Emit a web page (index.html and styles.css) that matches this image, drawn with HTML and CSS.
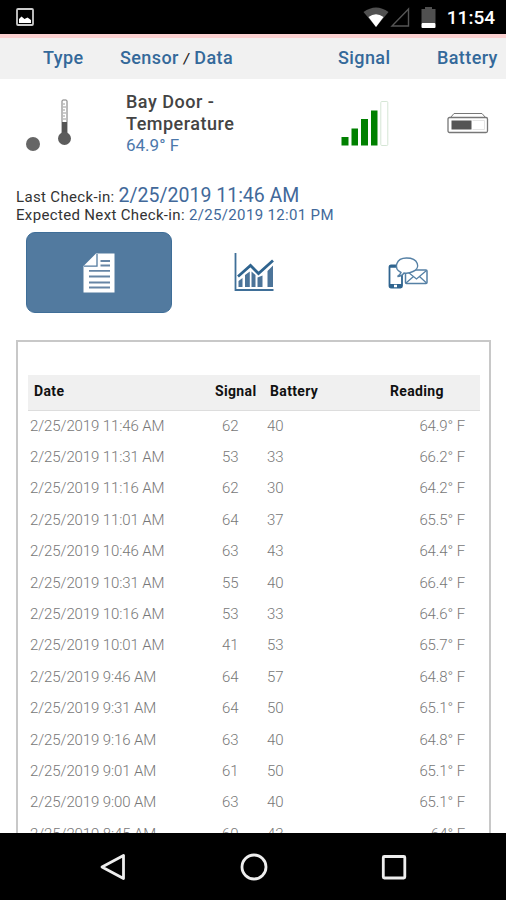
FILE: index.html
```html
<!DOCTYPE html>
<html lang="en">

<head>
    <meta charset="UTF-8">
    <meta name="viewport" content="width=device-width, initial-scale=1.0">
    <title>Bay Door - Temperature</title>
    <link rel="stylesheet" href="styles.css">
</head>

<body>
    <div class="screen">
        <header class="status-bar">
            <svg class="status-picture" width="18" height="18" viewBox="0 0 18 18">
                <rect x="1" y="1" width="16" height="16" rx="1" fill="none" stroke="#ccc" stroke-width="1.8" />
                <path d="M3 15V11L5.500 8.500 8.500 11 11.500 9.500 15 12V15Z" fill="#fff" />
            </svg>
            <div class="status-icons">
                <svg width="26" height="20" viewBox="0 0 26 20">
                    <path d="M0.500 5Q13-4 25.500 5L13 20Z" fill="#505050" />
                    <path d="M5.500 10Q13 4.500 20.500 10L13 20Z" fill="#fff" />
                </svg>
                <svg class="status-cell" width="20" height="20" viewBox="0 0 20 20">
                    <path d="M2 19H18.500V2Z" fill="none" stroke="#555" stroke-width="1.4" />
                </svg>
                <svg class="status-battery" width="15" height="22" viewBox="0 0 15 22">
                    <path d="M0.500 2H4V0H11V2H14.500V16H0.500Z" fill="#505050" />
                    <rect x="0.500" y="16" width="14" height="5" rx="1" fill="#fff" />
                </svg>
                <span class="clock">11:54</span>
            </div>
        </header>

        <div class="sensor-header">
            <span>Type</span>
            <span>Sensor <i>/</i> Data</span>
            <span>Signal</span>
            <span>Battery</span>
        </div>

        <div class="sensor-row">
            <div class="sensor-type">
                <svg width="50" height="56" viewBox="0 0 50 56">
                    <circle cx="8" cy="45" r="7" fill="#666" />
                    <rect x="37" y="1" width="5" height="34" rx="1" fill="#fff" stroke="#777" />
                    <path d="M38 5H40M38 8H41M38 11H40M38 14H41M38 17H40M38 20H41" stroke="#999" />
                    <rect x="37" y="23" width="5" height="14" fill="#555" />
                    <circle cx="39.500" cy="39.500" r="6.500" fill="#5c5c5c" />
                </svg>
            </div>
            <div class="sensor-name">
                <strong>Bay Door -<br>Temperature</strong>
                <span class="sensor-value">64.9° F</span>
            </div>
            <div class="sensor-signal">
                <svg width="48" height="47" viewBox="0 0 48 47">
                    <g fill="#008000">
                        <rect x="0.500" y="37" width="7" height="8.500" />
                        <rect x="10.500" y="28.500" width="6.500" height="17" />
                        <rect x="20" y="19" width="7" height="26.500" />
                        <rect x="30" y="10.500" width="6.500" height="35" />
                    </g>
                    <rect x="39.800" y="1.500" width="7" height="44" rx="1" fill="#fff" stroke="#d5e6d5" />
                </svg>
            </div>
            <div class="sensor-battery">
                <svg width="42" height="22" viewBox="0 0 42 22">
                    <path d="M3.500 5.500L7 1.500H35L38.500 5.500" fill="#fff" stroke="#777" />
                    <rect x="1" y="5.500" width="39.500" height="15" rx="1.500" fill="#fff" stroke="#777" stroke-width="1.300" />
                    <rect x="4.500" y="8.500" width="20" height="9" fill="#555" />
                    <path d="M25.500 8.500H37.500V17.500H25.500" fill="none" stroke="#ddd" stroke-width="0.800" />
                </svg>
            </div>
        </div>

        <div class="checkin">
            <p>Last Check-in: <b class="last-time">2/25/2019 11:46 AM</b></p>
            <p>Expected Next Check-in: <b>2/25/2019 12:01 PM</b></p>
        </div>

        <nav class="tabs">
            <a class="tab active">
                <svg width="32" height="40" viewBox="0 0 32 40">
                    <path d="M0.500 13L13 0.500H31.500V39.500H0.500Z" fill="#fff" />
                    <path d="M1 13.200H14V1" fill="none" stroke="#527a9f" stroke-width="1.300" />
                    <path d="M17.500 8H27M17.500 12.500H27M6 17.800H27M6 23.500H27M6 29.500H27M6 34.500H27" stroke="#6685a5" stroke-width="1.800" />
                </svg>
            </a>
            <a class="tab">
                <svg width="40" height="39" viewBox="0 0 40 39">
                    <path d="M1.500 0V37H39.500" fill="none" stroke="#3f6f98" stroke-width="1.800" />
                    <path d="M4 23.500L16.500 12.500 24.500 20.500 39 7.500" fill="none" stroke="#2f648f" stroke-width="2.800" />
                    <path d="M4.500 34V28L8.500 25V34ZM11 34V22L15.800 18.500V34ZM17.500 34V18.500L21.500 22V34ZM23.500 34V24.500L28.500 22.500V34ZM33.500 34V18L39 12.500V34Z" fill="#4c7499" />
                </svg>
            </a>
            <a class="tab">
                <svg width="40" height="32" viewBox="0 0 40 32">
                    <rect x="1.500" y="8.500" width="12.500" height="22" rx="1.500" fill="#fff" stroke="#2f648f" stroke-width="1.800" />
                    <path d="M1.500 27H14V30.500H1.500Z" fill="#2f648f" />
                    <path d="M6 29H9" stroke="#fff" stroke-width="2.500" />
                    <path d="M1.500 9.500H9" stroke="#2f648f" stroke-width="2.500" />
                    <rect x="17.500" y="13" width="21.500" height="13.500" rx="1" fill="#fff" stroke="#5580a5" stroke-width="1.500" />
                    <path d="M18 13.500L28.500 22 38.500 13.500M18 26L25.500 19.500M38.500 26L31.500 19.500" fill="none" stroke="#5580a5" stroke-width="1.300" />
                    <path d="M13 15.500C5 11.500 8 1 18.500 1C30.500 1 33 11 25 14.500C22 16 19 16.500 16 16C14.500 18 12 19.500 9.500 19.500C11.500 18.500 12.500 17 13 15.500Z" fill="#fff" stroke="#5580a5" stroke-width="1.400" />
                </svg>
            </a>
        </nav>

        <main class="panel">
            <table class="readings">
                <thead>
                    <tr>
                        <th class="date">Date</th>
                        <th class="signal">Signal</th>
                        <th class="battery">Battery</th>
                        <th class="reading">Reading</th>
                    </tr>
                </thead>
                <tbody>
                    <tr><td>2/25/2019 11:46 AM</td><td>62</td><td>40</td><td>64.9° F</td></tr>
                    <tr><td>2/25/2019 11:31 AM</td><td>53</td><td>33</td><td>66.2° F</td></tr>
                    <tr><td>2/25/2019 11:16 AM</td><td>62</td><td>30</td><td>64.2° F</td></tr>
                    <tr><td>2/25/2019 11:01 AM</td><td>64</td><td>37</td><td>65.5° F</td></tr>
                    <tr><td>2/25/2019 10:46 AM</td><td>63</td><td>43</td><td>64.4° F</td></tr>
                    <tr><td>2/25/2019 10:31 AM</td><td>55</td><td>40</td><td>66.4° F</td></tr>
                    <tr><td>2/25/2019 10:16 AM</td><td>53</td><td>33</td><td>64.6° F</td></tr>
                    <tr><td>2/25/2019 10:01 AM</td><td>41</td><td>53</td><td>65.7° F</td></tr>
                    <tr><td>2/25/2019 9:46 AM</td><td>64</td><td>57</td><td>64.8° F</td></tr>
                    <tr><td>2/25/2019 9:31 AM</td><td>64</td><td>50</td><td>65.1° F</td></tr>
                    <tr><td>2/25/2019 9:16 AM</td><td>63</td><td>40</td><td>64.8° F</td></tr>
                    <tr><td>2/25/2019 9:01 AM</td><td>61</td><td>50</td><td>65.1° F</td></tr>
                    <tr><td>2/25/2019 9:00 AM</td><td>63</td><td>40</td><td>65.1° F</td></tr>
                    <tr><td>2/25/2019 8:45 AM</td><td>60</td><td>43</td><td>64° F</td></tr>
                </tbody>
            </table>
        </main>

        <footer class="nav-bar">
            <svg width="28" height="28" viewBox="0 0 28 28">
                <path d="M3 14L24.500 2.500V25.500Z" />
            </svg>
            <svg width="28" height="28" viewBox="0 0 28 28">
                <circle cx="14" cy="14" r="12" />
            </svg>
            <svg width="28" height="28" viewBox="0 0 28 28">
                <rect x="3.300" y="3.500" width="21.500" height="21.500" rx="1" />
            </svg>
        </footer>
    </div>
</body>

</html>
```
FILE: styles.css
```css
* {
    box-sizing: border-box;
}

body {
    margin: 0;
    font-family: Roboto, "Liberation Sans", sans-serif;
    background-color: #fff;
}

svg {
    display: block;
}

.screen {
    display: flex;
    flex-direction: column;
    width: 506px;
    height: 900px;
    overflow: hidden;
}

/* Android status bar */
.status-bar {
    display: flex;
    flex: none;
    justify-content: space-between;
    height: 38px;
    padding: 7px 10px 0 16px;
    background-color: #000;
    border-bottom: 4px solid #fbd0d0;
}

.status-picture {
    margin-top: 1px;
}

.status-icons {
    display: flex;
    align-items: flex-start;
    margin-right: 1px;
}

.status-cell {
    margin-left: 1px;
}

.status-battery {
    margin-left: 11px;
}

.clock {
    margin-left: 11px;
    color: #fff;
    font-size: 19px;
    font-weight: 500;
    line-height: 22px;
}

/* Sensor summary */
.sensor-header,
.sensor-row {
    display: grid;
    flex: none;
    grid-template-columns: 120px 218px 98px 1fr;
}

.sensor-header {
    height: 41px;
    background-color: #f1f1f1;
    color: #34699a;
    font-size: 18px;
    font-weight: 500;
    letter-spacing: 0.4px;
    line-height: 40px;
    white-space: nowrap;
}

.sensor-header span:first-child {
    padding-left: 43px;
}

.sensor-header span:last-child {
    padding-left: 1px;
}

.sensor-header i {
    color: #222;
    font-size: 14px;
}

.sensor-row {
    height: 107px;
}

.sensor-type {
    padding: 20px 0 0 25px;
}

.sensor-name {
    padding: 12px 0 0 6px;
    color: #444;
    font-size: 18px;
    line-height: 22px;
}

.sensor-name strong {
    font-weight: 500;
    letter-spacing: 0.5px;
}

.sensor-value {
    display: block;
    color: #4c78ab;
    font-size: 17px;
    line-height: 20px;
}

.sensor-signal {
    padding: 21px 0 0 3px;
}

.sensor-battery {
    padding: 33px 0 0 11px;
}

.checkin {
    flex: none;
    height: 46px;
    padding-left: 16px;
    color: #333;
    font-size: 15px;
    letter-spacing: 0.34px;
}

.checkin p {
    height: 20px;
    margin: 0;
    line-height: 19px;
    white-space: nowrap;
}

.checkin b {
    color: #42699a;
    font-weight: 400;
}

.checkin .last-time {
    font-size: 19.500px;
    letter-spacing: 0;
}

/* Tabs */
.tabs {
    display: grid;
    flex: none;
    grid-template-columns: 146px 146px 146px;
    column-gap: 9px;
    height: 81px;
    padding-left: 26px;
}

.tab {
    display: flex;
    align-items: center;
    justify-content: center;
    border-radius: 9px;
}

.tab.active {
    background-color: #527a9f;
    border: 1px solid #3f6e98;
}

.tab:last-child svg {
    margin-left: -2px;
}

/* Readings */
.panel {
    flex: 1;
    min-height: 0;
    margin: 27px 15px 0 16px;
    padding: 33px 9px 0 10px;
    overflow: hidden;
    border: 2px solid #c8c8c8;
    border-bottom: none;
}

.readings {
    width: 452px;
    border-collapse: collapse;
    table-layout: fixed;
    color: #777;
    font-size: 15px;
    font-weight: 300;
    letter-spacing: -0.1px;
}

.readings th {
    height: 35px;
    padding: 0 0 2px;
    background-color: #f0f0f0;
    border-bottom: 1px solid #ddd;
    color: #111;
    font-size: 14px;
    font-weight: 700;
    letter-spacing: 0.35px;
    text-align: left;
}

.readings .date {
    width: 187px;
    padding-left: 6px;
}

.readings .signal {
    width: 52px;
}

.readings .battery {
    width: 123px;
    padding-left: 3px;
}

.readings td {
    height: 31.400px;
    padding: 0;
    white-space: nowrap;
}

.readings td:first-child {
    padding-left: 2px;
}

.readings td:nth-child(2) {
    padding-left: 7px;
}

.readings td:last-child {
    padding-right: 15px;
    text-align: right;
}

/* Android navigation bar */
.nav-bar {
    display: flex;
    flex: none;
    justify-content: space-between;
    height: 67px;
    padding: 20px 98px 0 99px;
    background-color: #000;
}

.nav-bar svg {
    fill: none;
    stroke: #eee;
    stroke-width: 2.8;
    stroke-linejoin: round;
}
```
